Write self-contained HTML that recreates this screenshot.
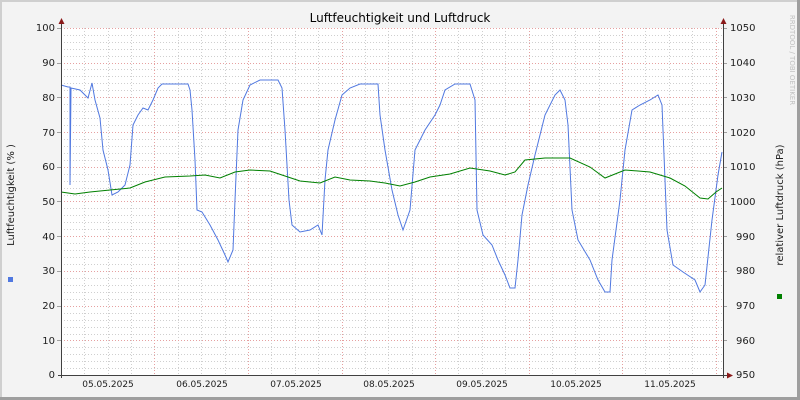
<!DOCTYPE html>
<html><head><style>html,body{margin:0;padding:0;background:#f3f3f3}svg{display:block}</style></head><body>
<svg width="800" height="400" viewBox="0 0 800 400" xmlns="http://www.w3.org/2000/svg" font-family="DejaVu Sans, Liberation Sans, sans-serif">
<rect x="0" y="0" width="800" height="400" fill="#f3f3f3"/>
<rect x="0" y="0" width="800" height="2" fill="#cfcfcf"/>
<rect x="0" y="0" width="2" height="400" fill="#cfcfcf"/>
<rect x="0" y="397" width="800" height="3" fill="#9e9e9e"/>
<rect x="797" y="0" width="3" height="400" fill="#9e9e9e"/>
<rect x="61" y="28" width="662" height="347" fill="#ffffff"/>
<g stroke="#cfcfcf" stroke-width="1" stroke-dasharray="1,2">
<path d="M61 35.5H723M61 42.5H723M61 49.5H723M61 56.5H723M61 69.5H723M61 76.5H723M61 83.5H723M61 90.5H723M61 104.5H723M61 111.5H723M61 118.5H723M61 125.5H723M61 139.5H723M61 146.5H723M61 153.5H723M61 160.5H723M61 174.5H723M61 181.5H723M61 188.5H723M61 195.5H723M61 208.5H723M61 215.5H723M61 222.5H723M61 229.5H723M61 243.5H723M61 250.5H723M61 257.5H723M61 264.5H723M61 278.5H723M61 285.5H723M61 292.5H723M61 299.5H723M61 313.5H723M61 320.5H723M61 327.5H723M61 334.5H723M61 347.5H723M61 354.5H723M61 361.5H723M61 368.5H723"/>
<path d="M84.5 28V375M108.5 28V375M131.5 28V375M178.5 28V375M201.5 28V375M225.5 28V375M271.5 28V375M295.5 28V375M318.5 28V375M365.5 28V375M388.5 28V375M412.5 28V375M458.5 28V375M482.5 28V375M505.5 28V375M552.5 28V375M575.5 28V375M599.5 28V375M645.5 28V375M669.5 28V375M692.5 28V375"/>
</g>
<g stroke="#e6a0a0" stroke-width="1" stroke-dasharray="1,2">
<path d="M61 28.5H723M61 63.5H723M61 97.5H723M61 132.5H723M61 167.5H723M61 201.5H723M61 236.5H723M61 271.5H723M61 306.5H723M61 340.5H723"/>
<path d="M154.5 28V375M248.5 28V375M342.5 28V375M435.5 28V375M529.5 28V375M622.5 28V375M716.5 28V375"/>
</g>
<g stroke="#a0a0a0"><path d="M57 28.5H61M57 63.5H61M57 97.5H61M57 132.5H61M57 167.5H61M57 201.5H61M57 236.5H61M57 271.5H61M57 306.5H61M57 340.5H61M723 28.5H727M723 63.5H727M723 97.5H727M723 132.5H727M723 167.5H727M723 201.5H727M723 236.5H727M723 271.5H727M723 306.5H727M723 340.5H727"/></g>
<polyline fill="none" stroke="#5078e0" stroke-width="1" points="61,85 68,87 70,87 70,185 71,88 80,90 88,98 92,83 95,100 100,118 103,150 108,170 112,195 118,192 125,185 130,165 133,125 138,115 143,108 148,110 153,100 158,88 162,84 188,84 190,90 192,110 195,160 197,210 202,212 210,225 218,240 225,255 228,262 233,250 235,200 238,130 243,100 250,85 260,80 278,80 282,88 285,130 289,200 292,225 300,232 310,230 318,225 322,235 325,180 328,150 335,120 342,95 350,88 360,84 378,84 380,115 385,150 392,190 398,215 403,230 410,210 415,150 425,130 435,115 440,105 445,90 455,84 470,84 475,100 477,210 483,235 492,245 498,260 505,275 510,288 515,288 518,260 522,215 528,185 535,155 545,115 555,95 560,90 565,100 568,125 572,210 578,240 590,260 598,280 605,292 610,292 612,260 620,200 625,150 632,110 640,105 650,100 658,95 662,105 667,230 673,265 683,272 695,280 700,292 705,285 712,220 718,175 722,152"/>
<polyline fill="none" stroke="#008000" stroke-width="1" points="61,192 75,194 90,192 110,190 130,188 145,182 165,177 190,176 205,175 220,178 235,172 250,170 270,171 285,176 300,181 320,183 335,177 350,180 370,181 385,183 400,186 415,182 430,177 450,174 470,168 490,171 505,175 515,172 525,160 545,158 570,158 590,167 605,178 625,170 650,172 670,178 685,186 700,198 708,199 716,192 722,188"/>
<line x1="61.5" y1="22" x2="61.5" y2="378" stroke="#404040"/>
<line x1="723.5" y1="22" x2="723.5" y2="378" stroke="#404040"/>
<line x1="58" y1="375.5" x2="727" y2="375.5" stroke="#404040"/>
<path d="M58.5 24L61.5 18L64.5 24Z M720.5 24L723.5 18L726.5 24Z" fill="#8b1a1a"/>
<path d="M727 372.5L733 375.5L727 378.5Z" fill="#8b1a1a"/>
<g font-size="10" fill="#202020" text-anchor="end">
<text x="55" y="31">100</text><text x="55" y="66">90</text><text x="55" y="101">80</text><text x="55" y="136">70</text><text x="55" y="170">60</text><text x="55" y="205">50</text><text x="55" y="240">40</text><text x="55" y="274">30</text><text x="55" y="309">20</text><text x="55" y="344">10</text><text x="55" y="378">0</text>
</g>
<g font-size="10" fill="#202020">
<text x="730" y="31">1050</text><text x="730" y="66">1040</text><text x="730" y="101">1030</text><text x="730" y="136">1020</text><text x="730" y="170">1010</text><text x="730" y="205">1000</text><text x="736" y="240">990</text><text x="736" y="274">980</text><text x="736" y="309">970</text><text x="736" y="344">960</text><text x="736" y="378">950</text>
</g>
<g font-size="9" fill="#202020" text-anchor="middle">
<text x="108" y="387">05.05.2025</text><text x="202" y="387">06.05.2025</text><text x="296" y="387">07.05.2025</text><text x="389" y="387">08.05.2025</text><text x="482" y="387">09.05.2025</text><text x="576" y="387">10.05.2025</text><text x="670" y="387">11.05.2025</text>
</g>
<text x="400" y="22" font-size="12" text-anchor="middle" fill="#000">Luftfeuchtigkeit und Luftdruck</text>
<text transform="translate(14,195) rotate(-90)" font-size="10" text-anchor="middle" fill="#202020">Luftfeuchtigkeit (% )</text>
<text transform="translate(783,205) rotate(-90)" font-size="10" text-anchor="middle" fill="#202020">relativer Luftdruck (hPa)</text>
<text transform="translate(790,60) rotate(90)" font-size="7" text-anchor="middle" fill="#c0c0c0">RRDTOOL / TOBI OETIKER</text>
<rect x="8" y="277" width="5" height="5" fill="#5078e0"/>
<rect x="777" y="294" width="5" height="5" fill="#008000"/>
</svg>
</body></html>
